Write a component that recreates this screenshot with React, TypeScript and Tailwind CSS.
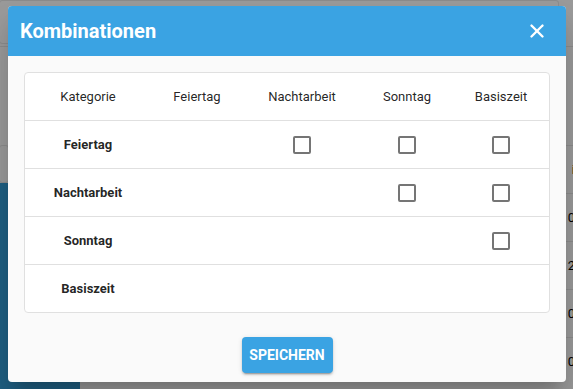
import { X } from "lucide-react";

const categories = ["Feiertag", "Nachtarbeit", "Sonntag", "Basiszeit"];

// a checkbox is shown when the column comes after the row in the list
const Checkbox = () => (
  <span className="block w-[18px] h-[18px] border-2 border-[#757575] rounded-[2px] bg-white" />
);

const BackgroundPage = () => (
  <div className="w-[573px] h-[389px] bg-[#9a9a9a] flex flex-col overflow-hidden">
    <div className="h-[47px] flex border-b border-[#8c8c8c]">
      <div className="w-[560px] h-[44px] border border-[#8c8c8c] rounded-[3px] -ml-[1px]" />
    </div>
    <div className="flex flex-1">
      <div className="w-[80px] flex flex-col">
        <div className="h-[136px] pt-[98px]">
          <div className="h-[38px] w-[10px] border border-[#8c8c8c] rounded-[3px] -ml-[1px]" />
        </div>
        <div className="flex-1 bg-[#1f5f82]" />
      </div>
      <div className="flex-1 flex flex-col pt-[98px] text-[13px] text-black font-[Roboto]">
        {["i", "0", "2", "0", "0"].map((t, i) => (
          <div key={i} className="h-[48px] shrink-0 border-t border-[#8c8c8c] flex items-center justify-end">
            <span className="-mr-[2px]">{t}</span>
          </div>
        ))}
      </div>
    </div>
  </div>
);

const App = () => {
  return (
    <div className="relative w-[573px] h-[389px] overflow-hidden font-[Roboto]">
      <BackgroundPage />

      <div className="absolute left-[8px] top-[6px] w-[558px] h-[376px] bg-[#fafafa] rounded-[4px] shadow-[0_11px_15px_-7px_rgba(0,0,0,0.2),0_24px_38px_3px_rgba(0,0,0,0.14)] flex flex-col overflow-hidden">
        <div className="h-[50px] bg-[#3aa3e3] flex items-center justify-between pl-[12px] pr-[18px]">
          <h2 className="text-white text-[20px] font-bold">Kombinationen</h2>
          <X className="text-white w-[22px] h-[22px]" strokeWidth={2.6} />
        </div>

        <div className="flex-1 flex flex-col px-[16px] pt-[16px]">
          <div className="bg-white border border-[#e0e0e0] rounded-[4px] text-[13px] text-[rgba(0,0,0,0.87)]">
            <div className="grid grid-cols-[126px_92px_118px_92px_1fr] h-[47px] items-center text-center">
              <span>Kategorie</span>
              {categories.map((c) => (
                <span key={c}>{c}</span>
              ))}
            </div>
            {categories.map((row, r) => (
              <div
                key={row}
                className="grid grid-cols-[126px_92px_118px_92px_1fr] h-[48px] items-center text-center border-t border-[#e0e0e0]"
              >
                <span className="font-bold">{row}</span>
                {categories.map((col, c) => (
                  <div key={col} className="flex justify-center">
                    {c > r && <Checkbox />}
                  </div>
                ))}
              </div>
            ))}
          </div>

          <div className="flex justify-center mt-[24px]">
            <button className="w-[91px] h-[36px] bg-[#3aa3e3] text-white text-[14px] font-bold rounded-[4px] shadow-[0_3px_1px_-2px_rgba(0,0,0,0.2),0_2px_2px_0_rgba(0,0,0,0.14),0_1px_5px_0_rgba(0,0,0,0.12)]">
              SPEICHERN
            </button>
          </div>
        </div>
      </div>
    </div>
  );
};

export default App;
